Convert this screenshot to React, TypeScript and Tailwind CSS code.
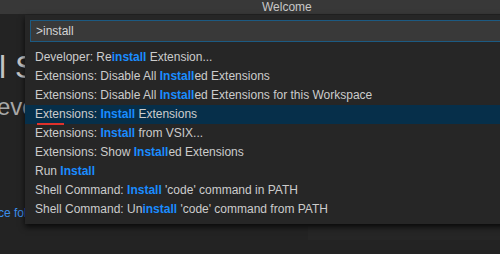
import React from "react";

interface Item {
  parts: [string, boolean][];
}

const items: Item[] = [
  { parts: [["Developer: Re", false], ["install", true], [" Extension...", false]] },
  { parts: [["Extensions: Disable All ", false], ["Install", true], ["ed Extensions", false]] },
  {
    parts: [
      ["Extensions: Disable All ", false],
      ["Install", true],
      ["ed Extensions for this Workspace", false],
    ],
  },
  { parts: [["Extensions: ", false], ["Install", true], [" Extensions", false]] },
  { parts: [["Extensions: ", false], ["Install", true], [" from VSIX...", false]] },
  { parts: [["Extensions: Show ", false], ["Install", true], ["ed Extensions", false]] },
  { parts: [["Run ", false], ["Install", true]] },
  { parts: [["Shell Command: ", false], ["Install", true], [" 'code' command in PATH", false]] },
  { parts: [["Shell Command: Un", false], ["install", true], [" 'code' command from PATH", false]] },
];

const SELECTED = 3;

export default function App() {
  return (
    <div
      className="w-[500px] h-[254px] overflow-hidden relative bg-[#1f1f1f] text-[#cccccc]"
      style={{ fontFamily: '"Liberation Sans", Arial, sans-serif' }}
    >
      {/* Title bar */}
      <div className="h-[14px] bg-[#383838] text-[12px] leading-[14px] text-[#c8c8c8] pl-[262px]">
        Welcome
      </div>

      {/* Welcome page behind the palette */}
      <div className="h-[240px] bg-[#232323] flex">
        <div className="w-[25px] overflow-hidden">
          <div className="mt-[36px] ml-[-1px] text-[32px] leading-[34px] font-light text-[#c4c4c4] whitespace-nowrap">
            l S
          </div>
          <div className="mt-[11px] ml-[-3px] text-[24px] leading-[24px] text-[#a8a8a8] whitespace-nowrap">
            evo
          </div>
          <div className="mt-[87px] ml-[-2px] text-[12px] leading-[14px] text-[#3b8eea] whitespace-nowrap">
            ce fol
          </div>
        </div>
        <div className="flex-1 flex flex-col">
          <div className="flex-1" />
          <div className="h-[14px] ml-[283px] bg-[#262626]" />
          <div className="h-[14px]" />
        </div>
      </div>

      {/* Quick open */}
      <div className="absolute left-[25px] top-[15px] w-[490px] h-[209px] bg-[#262626] pt-[5px] shadow-[0_3px_6px_rgba(0,0,0,0.75)]">
        <div className="ml-[5px] h-[22px] border border-[#1c5a82] bg-[#393939] pl-[5px] text-[12px] leading-[20px] text-[#d4d4d4]">
          &gt;install
        </div>
        <div className="mt-[6px]">
          {items.map((item, i) => (
            <div
              key={i}
              className={
                "h-[19px] pl-[10px] text-[12px] leading-[19px] whitespace-nowrap " +
                (i === SELECTED ? "bg-[#062f4a]" : "")
              }
            >
              {item.parts.map(([t, hl], j) =>
                hl ? (
                  <span key={j} className="font-bold text-[#1a8cff]">
                    {t}
                  </span>
                ) : (
                  <span key={j}>{t}</span>
                )
              )}
            </div>
          ))}
        </div>
      </div>

      {/* red annotation line */}
      <div className="absolute left-[37px] top-[123px] w-[27px] h-[2px] bg-[#e0312b]" />
    </div>
  );
}
